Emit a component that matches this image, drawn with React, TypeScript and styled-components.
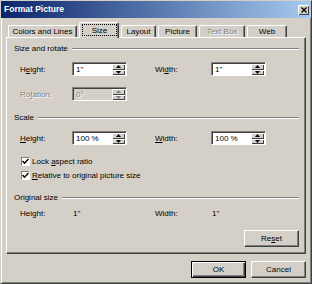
import React from "react";
import styled, { createGlobalStyle } from "styled-components";

const Global = createGlobalStyle`
  html, body { margin: 0; padding: 0; background: #d4d0c8; }
  * { box-sizing: border-box; }
`;

const Win = styled.div`
  width: 312px;
  height: 284px;
  background: #d4d0c8;
  border: 1px solid;
  border-color: #d4d0c8 #404040 #404040 #d4d0c8;
  box-shadow: inset 1px 1px #ffffff, inset -1px -1px #808080;
  display: flex;
  flex-direction: column;
  font-family: "Liberation Sans", Arial, sans-serif;
  font-size: 8px;
  line-height: 11px;
  color: #000;
`;

const TitleBar = styled.div`
  height: 17px;
  display: flex;
  align-items: center;
  padding-left: 3px;
  background: linear-gradient(to right, #0a246a, #a6caf0);
  color: #fff;
  font-weight: bold;
  font-size: 8.5px;
`;

const CloseBtn = styled.div`
  margin-left: auto;
  margin-right: 2px;
  width: 11px;
  height: 10px;
  background: #d4d0c8;
  box-shadow: inset 1px 1px #fff, inset -1px -1px #404040;
  display: flex;
  align-items: center;
  justify-content: center;
`;

const Body = styled.div`
  padding: 0 5px;
  display: flex;
  flex-direction: column;
`;

const TabStrip = styled.div`
  margin-top: 4px;
  height: 15px;
  display: flex;
  align-items: flex-end;
  gap: 2px;
  padding-left: 2px;
  position: relative;
  z-index: 1;
`;

const Tab = styled.div<{ $w: number; $sel?: boolean; $dis?: boolean }>`
  width: ${(p) => p.$w}px;
  height: ${(p) => (p.$sel ? 16 : 12)}px;
  margin-bottom: ${(p) => (p.$sel ? -1 : 0)}px;
  background: #d4d0c8;
  border-top: 1px solid #fff;
  border-left: 1px solid #fff;
  border-right: 1px solid #404040;
  border-radius: 2px 2px 0 0;
  box-shadow: inset -1px 0 #808080;
  display: flex;
  align-items: center;
  justify-content: center;
  padding: ${(p) => (p.$sel ? "1px 1px 2px 2px" : "0")};
  color: ${(p) => (p.$dis ? "#808080" : "#000")};
  text-shadow: ${(p) => (p.$dis ? "1px 1px #fff" : "none")};
  white-space: nowrap;
`;

const Focus = styled.div`
  flex: 1;
  align-self: stretch;
  border: 1px dotted #000;
  display: flex;
  align-items: center;
  justify-content: center;
`;

const Panel = styled.div`
  border: 1px solid;
  border-color: #fff #404040 #404040 #fff;
  box-shadow: inset -1px -1px #808080;
  padding: 0 6px 6px 6px;
  display: flex;
  flex-direction: column;
`;

const Header = styled.div<{ $mt: number }>`
  margin-top: ${(p) => p.$mt}px;
  height: 11px;
  display: flex;
  align-items: center;
  gap: 4px;
  padding-left: 1px;
  white-space: nowrap;
  &::after {
    content: "";
    flex: 1;
    height: 0;
    border-top: 1px solid #808080;
    border-bottom: 1px solid #fff;
  }
`;

const Row = styled.div<{ $mt: number; $h?: number }>`
  margin-top: ${(p) => p.$mt}px;
  height: ${(p) => p.$h ?? 14}px;
  padding-left: 7px;
  display: grid;
  grid-template-columns: 52px 55px 28px 56px 55px;
  align-items: center;
  white-space: nowrap;
`;

const Label = styled.span<{ $dis?: boolean }>`
  color: ${(p) => (p.$dis ? "#808080" : "#000")};
  text-shadow: ${(p) => (p.$dis ? "1px 1px #fff" : "none")};
`;

const Value = styled.span`
  padding-left: 1px;
`;

const Key = styled.u`
  text-decoration: underline;
`;

const Field = styled.div<{ $dis?: boolean }>`
  grid-column: ${"auto"};
  width: 55px;
  height: 14px;
  border: 1px solid;
  border-color: #808080 #fff #fff #808080;
  box-shadow: inset 1px 1px #404040;
  background: ${(p) => (p.$dis ? "#d4d0c8" : "#fff")};
  padding: 1px 1px 0 1px;
  display: flex;
`;

const FieldText = styled.span<{ $dis?: boolean }>`
  flex: 1;
  padding-left: 2px;
  line-height: 11px;
  color: ${(p) => (p.$dis ? "#808080" : "#000")};
  text-shadow: ${(p) => (p.$dis ? "1px 1px #fff" : "none")};
`;

const Spinner = styled.div`
  width: 13px;
  display: flex;
  flex-direction: column;
`;

const SpinBtn = styled.div`
  flex: 1;
  background: #d4d0c8;
  box-shadow: inset 1px 1px #fff, inset -1px -1px #404040;
  display: flex;
  align-items: center;
  justify-content: center;
`;

const CheckRow = styled.label<{ $mt: number }>`
  margin-top: ${(p) => p.$mt}px;
  height: 13px;
  padding-left: 8px;
  display: flex;
  align-items: center;
  gap: 2px;
  white-space: nowrap;
`;

const Box = styled.span`
  width: 9px;
  height: 9px;
  border: 1px solid;
  border-color: #808080 #fff #fff #808080;
  background: #fff;
  display: flex;
  align-items: center;
  justify-content: center;
`;

const ResetRow = styled.div`
  margin-top: 11px;
  display: flex;
  justify-content: flex-end;
`;

const Button = styled.button<{ $def?: boolean }>`
  width: 55px;
  height: 17px;
  padding: 0;
  margin: 0;
  font-family: inherit;
  font-size: 8px;
  color: #000;
  background: #d4d0c8;
  border: 1px solid;
  border-color: ${(p) => (p.$def ? "#000" : "#fff #404040 #404040 #fff")};
  box-shadow: ${(p) =>
    p.$def
      ? "inset 1px 1px #fff, inset -1px -1px #404040, inset -2px -2px #808080"
      : "inset -1px -1px #808080"};
`;

const ButtonRow = styled.div`
  margin-top: 7px;
  display: flex;
  justify-content: flex-end;
  gap: 5px;
`;

const Arrow = ({ up, dis }: { up?: boolean; dis?: boolean }) => (
  <svg width="5" height="3" viewBox="0 0 5 3">
    <polygon
      points={up ? "2.5,0 5,3 0,3" : "0,0 5,0 2.5,3"}
      fill={dis ? "#808080" : "#000"}
    />
  </svg>
);

const Spin = ({ value, dis }: { value: string; dis?: boolean }) => (
  <Field $dis={dis}>
    <FieldText $dis={dis}>{value}</FieldText>
    <Spinner>
      <SpinBtn>
        <Arrow up dis={dis} />
      </SpinBtn>
      <SpinBtn>
        <Arrow dis={dis} />
      </SpinBtn>
    </Spinner>
  </Field>
);

const Check = () => (
  <Box>
    <svg width="7" height="7" viewBox="0 0 7 7">
      <polyline points="0.5,3 2.5,5.2 6.5,1" fill="none" stroke="#000" strokeWidth="1.4" />
    </svg>
  </Box>
);

export default function App() {
  return (
    <>
      <Global />
      <Win>
        <TitleBar>
          Format Picture
          <CloseBtn>
            <svg width="6" height="6" viewBox="0 0 6 6">
              <path d="M0.5 0.5 L5.5 5.5 M5.5 0.5 L0.5 5.5" stroke="#000" strokeWidth="1.3" />
            </svg>
          </CloseBtn>
        </TitleBar>
        <Body>
          <TabStrip>
            <Tab $w={69}>Colors and Lines</Tab>
            <Tab $w={40} $sel>
              <Focus>Size</Focus>
            </Tab>
            <Tab $w={35}>Layout</Tab>
            <Tab $w={39}>Picture</Tab>
            <Tab $w={46} $dis>Text Box</Tab>
            <Tab $w={40}>Web</Tab>
          </TabStrip>
          <Panel>
            <Header $mt={5}>Size and rotate</Header>
            <Row $mt={8}>
              <Label>
                H<Key>e</Key>ight:
              </Label>
              <Spin value={'1"'} />
              <span />
              <Label>
                Wi<Key>d</Key>th:
              </Label>
              <Spin value={'1"'} />
            </Row>
            <Row $mt={11}>
              <Label $dis>
                Ro<Key>t</Key>ation:
              </Label>
              <Spin value="0°" dis />
            </Row>
            <Header $mt={11}>Scale</Header>
            <Row $mt={8}>
              <Label>
                <Key>H</Key>eight:
              </Label>
              <Spin value="100 %" />
              <span />
              <Label>
                <Key>W</Key>idth:
              </Label>
              <Spin value="100 %" />
            </Row>
            <CheckRow $mt={10}>
              <Check />
              <span>
                Lock <Key>a</Key>spect ratio
              </span>
            </CheckRow>
            <CheckRow $mt={1}>
              <Check />
              <span>
                <Key>R</Key>elative to original picture size
              </span>
            </CheckRow>
            <Header $mt={10}>Original size</Header>
            <Row $mt={5} $h={11}>
              <Label>Height:</Label>
              <Value>1"</Value>
              <span />
              <Label>Width:</Label>
              <Value>1"</Value>
            </Row>
            <ResetRow>
              <Button>
                Re<Key>s</Key>et
              </Button>
            </ResetRow>
          </Panel>
          <ButtonRow>
            <Button $def>OK</Button>
            <Button>Cancel</Button>
          </ButtonRow>
        </Body>
      </Win>
    </>
  );
}
